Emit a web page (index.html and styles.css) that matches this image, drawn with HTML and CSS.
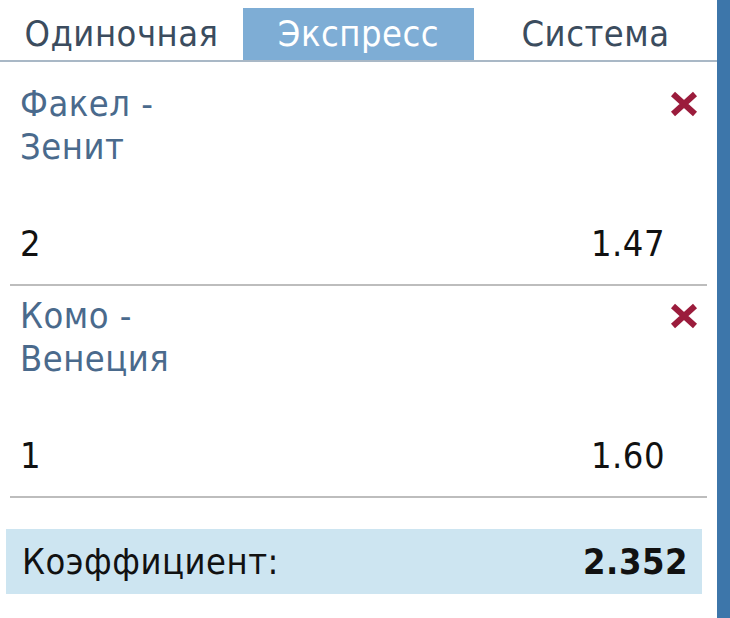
FILE: index.html
```html
<!DOCTYPE html>
<html lang="ru">
<head>
    <meta charset="UTF-8">
    <title>Купон</title>
    <link rel="stylesheet" href="styles.css">
</head>
<body>
    <div id="slip">
        <div id="slip-panel">
            <div id="tabs">
                <div class="tab tab-single">Одиночная</div>
                <div class="tab tab-express active">Экспресс</div>
                <div class="tab tab-system">Система</div>
            </div>

            <div class="bet bet-first">
                <div class="bet-top">
                    <div class="bet-name">Факел -<br>Зенит</div>
                    <span class="bet-remove">
                        <svg width="30" height="28" viewBox="0 0 30 28"><path d="M4 4L26 24M26 4L4 24" stroke="#9b1c3c" stroke-width="6"/></svg>
                    </span>
                </div>
                <div class="bet-bottom">
                    <span class="bet-outcome">2</span>
                    <span class="bet-odds">1.47</span>
                </div>
            </div>

            <div class="bet">
                <div class="bet-top">
                    <div class="bet-name">Комо -<br>Венеция</div>
                    <span class="bet-remove">
                        <svg width="30" height="28" viewBox="0 0 30 28"><path d="M4 4L26 24M26 4L4 24" stroke="#9b1c3c" stroke-width="6"/></svg>
                    </span>
                </div>
                <div class="bet-bottom">
                    <span class="bet-outcome">1</span>
                    <span class="bet-odds">1.60</span>
                </div>
            </div>

            <div id="total">
                <span>Коэффициент:</span>
                <b>2.352</b>
            </div>
        </div>
        <div id="slip-edge"></div>
    </div>
</body>
</html>
```

FILE: styles.css
```css
body {
    margin: 0;
    padding: 0;
    background-color: #fff;
    font-family: "DejaVu Sans Condensed", "DejaVu Sans", Verdana, sans-serif;
    font-size: 36px;
    letter-spacing: 0.5px;
    color: #111;
}

#slip {
    display: flex;
    height: 618px;
}

#slip-panel {
    flex: 1;
}

/* blue border on the right side */
#slip-edge {
    width: 13px;
    background-color: #3d76aa;
}

#tabs {
    display: flex;
    margin-top: 8px;
    border-bottom: 2px solid #a9b8c6;
}

.tab {
    height: 52px;
    line-height: 52px;
    text-align: center;
    color: #3b4c5e;
}

.tab-single { width: 243px; }
.tab-express { width: 231px; }
.tab-system { width: 243px; }

.tab.active {
    background-color: #7eadd5;
    color: #fff;
}

.bet {
    margin: 0 10px;
    padding: 8px 0 19px;
    border-bottom: 2px solid #bdbdbd;
}

.bet-first {
    padding-top: 20px;
}

.bet-top {
    display: flex;
    justify-content: space-between;
    padding: 0 8px 0 10px;
}

.bet-name {
    line-height: 43px;
    color: #4a6a8c;
}

.bet-remove {
    margin-top: 3px;
}

.bet-bottom {
    display: flex;
    justify-content: space-between;
    margin-top: 54px;
    padding: 0 42px 0 10px;
    line-height: 43px;
}

#total {
    display: flex;
    justify-content: space-between;
    align-items: center;
    margin: 31px 15px 0 6px;
    height: 65px;
    padding: 0 14px 0 16px;
    background-color: #cde5f1;
}

#total b {
    font-weight: bold;
}
```
